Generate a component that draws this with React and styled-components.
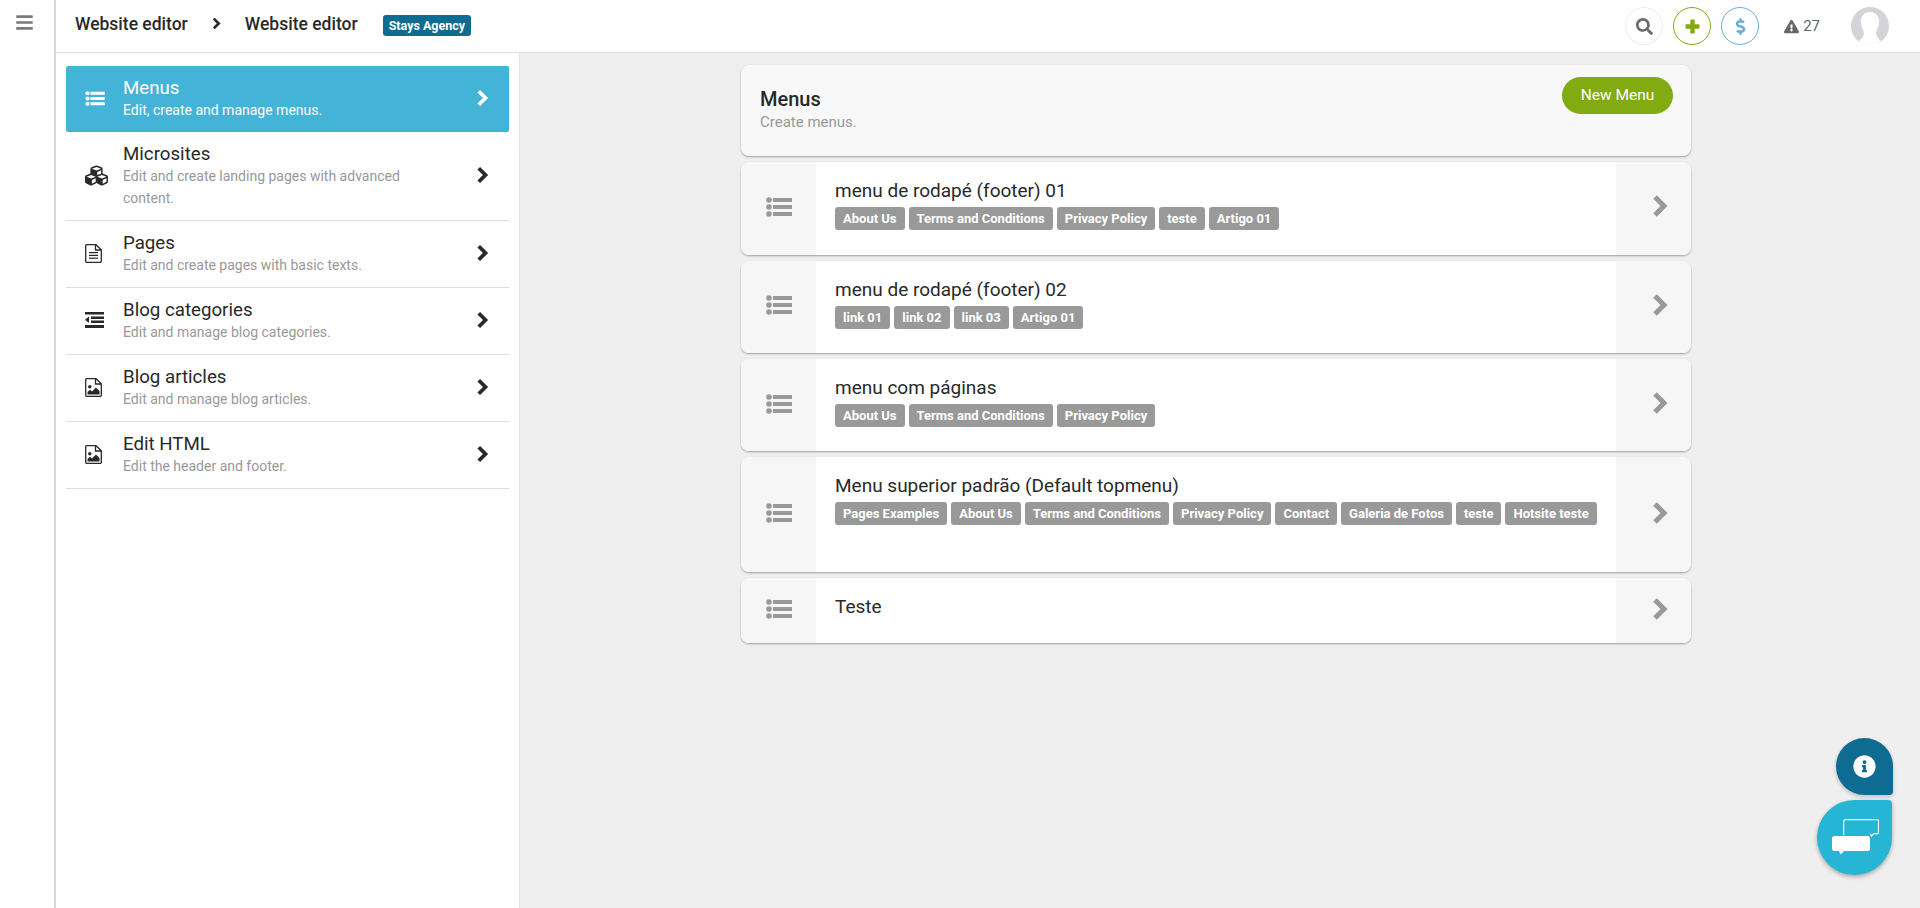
import styled, { createGlobalStyle } from "styled-components";
import {
  FaBars,
  FaCubes,
  FaDollarSign,
  FaExclamationTriangle,
  FaInfoCircle,
  FaSearch,
} from "react-icons/fa";

// thick chevron, the package one is too thin next to the reference
const Chevron = ({ width, height }) => (
  <svg viewBox="0 0 16 24" width={width} height={height}>
    <polyline points="3,3 12,12 3,21" fill="none" stroke="currentColor" strokeWidth="5" />
  </svg>
);

const PlusIcon = () => (
  <svg viewBox="0 0 15 15" width="15" height="15" fill="currentColor">
    <rect x="5.300" y="0.500" width="4.400" height="14" rx="0.800" />
    <rect x="0.500" y="5.300" width="14" height="4.400" rx="0.800" />
  </svg>
);

const ListIcon = ({ width, height }) => (
  <svg viewBox="0 0 26 20" width={width} height={height} fill="currentColor">
    <circle cx="3" cy="3" r="2.800" />
    <circle cx="3" cy="10" r="2.800" />
    <circle cx="3" cy="17" r="2.800" />
    <rect x="7" y="1" width="19" height="4" />
    <rect x="7" y="8" width="19" height="4" />
    <rect x="7" y="15" width="19" height="4" />
  </svg>
);

const OutdentIcon = () => (
  <svg viewBox="0 0 19 16" width="19" height="16" fill="currentColor">
    <rect x="0" y="0" width="19" height="2.500" />
    <rect x="6" y="4.500" width="13" height="2.500" />
    <rect x="6" y="8.500" width="13" height="2.500" />
    <rect x="0" y="13" width="19" height="3" />
    <polygon points="4,4.500 0,7.800 4,11" />
  </svg>
);

const FileIcon = ({ children }) => (
  <svg viewBox="0 0 17 19" width="17" height="19" fill="currentColor">
    <path
      d="M1.500 .7h9.500l5.300 5v11.800a.8.8 0 0 1-.8.8H1.500a.8.8 0 0 1-.8-.8V1.500a.8.8 0 0 1 .8-.8zM10.500 1v5h5.500"
      fill="none"
      stroke="currentColor"
      strokeWidth="1.300"
    />
    {children}
  </svg>
);

const PageIcon = () => (
  <FileIcon>
    <rect x="4" y="8" width="9" height="1.200" />
    <rect x="4" y="10.800" width="9" height="1.200" />
    <rect x="4" y="13.600" width="9" height="1.200" />
  </FileIcon>
);

const ImageIcon = () => (
  <FileIcon>
    <circle cx="4.800" cy="8.800" r="1.700" />
    <polygon points="2.500,16.500 2.500,14 5,11.800 7,13.500 11,9.500 14.500,13 14.500,16.500" />
  </FileIcon>
);

const CubesIcon = () => <FaCubes size={23} />;

const MenusIcon = () => <ListIcon width={20} height={15} />;

const sections = [
  { title: "Menus", text: "Edit, create and manage menus.", Icon: MenusIcon, active: true },
  { title: "Microsites", text: "Edit and create landing pages with advanced content.", Icon: CubesIcon },
  { title: "Pages", text: "Edit and create pages with basic texts.", Icon: PageIcon },
  { title: "Blog categories", text: "Edit and manage blog categories.", Icon: OutdentIcon },
  { title: "Blog articles", text: "Edit and manage blog articles.", Icon: ImageIcon },
  { title: "Edit HTML", text: "Edit the header and footer.", Icon: ImageIcon },
];

const menus = [
  {
    title: "menu de rodapé (footer) 01",
    height: 92.5,
    links: ["About Us", "Terms and Conditions", "Privacy Policy", "teste", "Artigo 01"],
  },
  {
    title: "menu de rodapé (footer) 02",
    height: 92.5,
    links: ["link 01", "link 02", "link 03", "Artigo 01"],
  },
  {
    title: "menu com páginas",
    height: 92,
    links: ["About Us", "Terms and Conditions", "Privacy Policy"],
  },
  {
    title: "Menu superior padrão (Default topmenu)",
    height: 115,
    links: [
      "Pages Examples",
      "About Us",
      "Terms and Conditions",
      "Privacy Policy",
      "Contact",
      "Galeria de Fotos",
      "teste",
      "Hotsite teste",
    ],
  },
  { title: "Teste", height: 65, links: [] },
];

const App = () => {
  return (
    <Page>
      <GlobalStyle />
      <Rail>
        <FaBars />
      </Rail>
      <Main>
        <TopBar>
          <Crumb>Website editor</Crumb>
          <CrumbArrow>
            <Chevron width={9} height={13} />
          </CrumbArrow>
          <Crumb>Website editor</Crumb>
          <AgencyBadge>Stays Agency</AgencyBadge>
          <TopActions>
            <RoundButton $color="#ececec" $icon="#6b6b6b">
              <FaSearch />
            </RoundButton>
            <RoundButton $color="#82ab12" $icon="#82ab12">
              <PlusIcon />
            </RoundButton>
            <RoundButton $color="#6aaed6" $icon="#6aaed6">
              <FaDollarSign />
            </RoundButton>
            <Alerts>
              <FaExclamationTriangle />
              27
            </Alerts>
            <Avatar>
              <svg viewBox="0 0 38 38" width="38" height="38">
                <circle cx="19" cy="19" r="19" fill="#d2d4d8" />
                <path
                  d="M19 5c-6.500 0-10 5-9 12 .5 4 3 6 3 9 0 3-2 5-5 8 3 2.500 7 4 11 4s8-1.500 11-4c-3-3-5-5-5-8 0-3 2.500-5 3-9 1-7-2.500-12-9-12z"
                  fill="#fff"
                />
              </svg>
            </Avatar>
          </TopActions>
        </TopBar>
        <Body>
          <Sidebar>
            {sections.map((section) => (
              <SideItem key={section.title} $active={section.active}>
                <SideIcon>
                  <section.Icon />
                </SideIcon>
                <SideText>
                  <SideTitle>{section.title}</SideTitle>
                  <SideDesc $active={section.active}>{section.text}</SideDesc>
                </SideText>
                <SideArrow>
                  <Chevron width={13} height={18} />
                </SideArrow>
              </SideItem>
            ))}
          </Sidebar>
          <Content>
            <HeaderCard>
              <div>
                <HeaderTitle>Menus</HeaderTitle>
                <HeaderText>Create menus.</HeaderText>
              </div>
              <NewButton>New Menu</NewButton>
            </HeaderCard>
            {menus.map((menu) => (
              <MenuCard key={menu.title} $height={menu.height}>
                <CardHandle>
                  <ListIcon width={26} height={20} />
                </CardHandle>
                <CardBody>
                  <CardTitle>{menu.title}</CardTitle>
                  <Tags>
                    {menu.links.map((link) => (
                      <Tag key={link}>{link}</Tag>
                    ))}
                  </Tags>
                </CardBody>
                <CardArrow>
                  <Chevron width={16} height={24} />
                </CardArrow>
              </MenuCard>
            ))}
          </Content>
        </Body>
      </Main>
      <InfoBubble>
        <FaInfoCircle />
      </InfoBubble>
      <ChatBubble>
        <svg viewBox="0 0 47 37" width="47" height="37" fill="none">
          <path
            d="M13 .7h32a1.500 1.500 0 0 1 1.500 1.500v11a1.500 1.500 0 0 1-1.500 1.500h-3l-2.500 2.500-1-2.500"
            stroke="#fff"
            strokeWidth="1.200"
          />
          <path d="M11.700 16V2.200A1.500 1.500 0 0 1 13 .7" stroke="#fff" strokeWidth="1.200" />
          <path
            d="M2.500 17h33a2.500 2.500 0 0 1 2.500 2.500v10a2.500 2.500 0 0 1-2.500 2.500H12l-3.500 3.500L7 32H2.500A2.500 2.500 0 0 1 0 29.500v-10A2.500 2.500 0 0 1 2.500 17z"
            fill="#fff"
          />
        </svg>
      </ChatBubble>
    </Page>
  );
};

const GlobalStyle = createGlobalStyle`
  html, body {
    margin: 0;
    height: 100%;
    overflow: hidden;
  }

  body {
    font-family: Roboto, "Liberation Sans", sans-serif;
    color: #292929;
  }

  * {
    box-sizing: border-box;
  }
`;

const Page = styled.div`
  display: flex;
  width: 1920px;
  height: 908px;
  background: #fff;
`;

const Rail = styled.div`
  flex: 0 0 56px;
  display: flex;
  justify-content: center;
  padding: 13px 5px 0 0;
  border-right: 2px solid #d9d9d9;
  color: #7a7a7a;
  font-size: 19px;
`;

const Main = styled.div`
  flex: 1;
  min-width: 0;
  display: flex;
  flex-direction: column;
`;

const TopBar = styled.header`
  flex: 0 0 53px;
  display: flex;
  align-items: center;
  padding: 0 31px 5px 19px;
  border-bottom: 1px solid #dedede;
`;

const Crumb = styled.span`
  font-size: 17.500px;
  font-weight: 500;
  color: #292929;
`;

const CrumbArrow = styled.span`
  display: flex;
  margin: 0 24px;
  color: #292929;
`;

const AgencyBadge = styled.span`
  display: flex;
  align-items: center;
  height: 21px;
  margin: 3px 0 0 25px;
  padding: 0 6px;
  border-radius: 3px;
  background: #0e6b92;
  color: #fff;
  font-size: 12.500px;
  font-weight: 700;
`;

const TopActions = styled.div`
  margin-left: auto;
  display: flex;
  align-items: center;
  gap: 10px;
  padding-top: 5px;
`;

const RoundButton = styled.span`
  width: 38px;
  height: 38px;
  display: flex;
  align-items: center;
  justify-content: center;
  border: 1px solid ${(props) => props.$color};
  border-radius: 50%;
  color: ${(props) => props.$icon};
  font-size: 17px;
`;

const Alerts = styled.span`
  display: flex;
  align-items: center;
  gap: 4px;
  margin: 0 21px 0 15px;
  color: #666;
  font-size: 15px;

  svg {
    font-size: 15px;
  }
`;

const Avatar = styled.span`
  display: flex;
  width: 38px;
  height: 38px;
`;

const Body = styled.div`
  flex: 1;
  min-height: 0;
  display: flex;
`;

const Sidebar = styled.nav`
  flex: 0 0 464px;
  padding: 13px 10px 0;
  border-right: 1px solid #e4e4e4;
  background: #fff;
`;

const SideItem = styled.div`
  display: flex;
  align-items: center;
  padding: 11px 20px 11px 19px;
  border-bottom: ${(props) => (props.$active ? "0" : "1px solid #dedede")};
  background: ${(props) => (props.$active ? "#44b3d8" : "transparent")};
  color: ${(props) => (props.$active ? "#fff" : "#292929")};
  border-radius: ${(props) => (props.$active ? "2px" : "0")};
`;

const SideIcon = styled.span`
  flex: 0 0 38px;
  display: flex;
  margin-top: -2px;
`;

const SideText = styled.div`
  flex: 1;
  padding-right: 50px;
`;

const SideTitle = styled.div`
  font-size: 18.700px;
  line-height: 22px;
`;

const SideDesc = styled.div`
  font-size: 14px;
  line-height: 22px;
  color: ${(props) => (props.$active ? "#fff" : "#999")};
`;

const SideArrow = styled.span`
  display: flex;
  margin-top: -3px;
`;

const Content = styled.main`
  flex: 1;
  display: flex;
  flex-direction: column;
  gap: 6px;
  padding: 12px 229px 0 221px;
  background: #efefef;
`;

const HeaderCard = styled.section`
  flex: 0 0 91px;
  display: flex;
  justify-content: space-between;
  padding: 12px 18px 0 19px;
  border-radius: 8px;
  background: #f8f8f8;
  box-shadow: 0 1px 2px rgba(0, 0, 0, 0.35);
`;

const HeaderTitle = styled.h2`
  margin: 10px 0 0;
  font-size: 20px;
  line-height: 24px;
  font-weight: 500;
`;

const HeaderText = styled.p`
  margin: 0;
  font-size: 15px;
  line-height: 22px;
  color: #999;
`;

const NewButton = styled.button`
  height: 37px;
  width: 111px;
  padding: 0 0 2px;
  border: 0;
  border-radius: 19px;
  background: #82ab12;
  color: #fff;
  font-family: inherit;
  font-size: 15.500px;
`;

const MenuCard = styled.article`
  flex: 0 0 ${(props) => props.$height}px;
  display: flex;
  overflow: hidden;
  border-radius: 8px;
  background: #fff;
  box-shadow: 0 1px 2px rgba(0, 0, 0, 0.35);
`;

const CardHandle = styled.div`
  flex: 0 0 75px;
  display: flex;
  align-items: center;
  justify-content: center;
  padding-bottom: 3px;
  background: #f6f6f6;
  color: #999;
`;

const CardBody = styled.div`
  flex: 1;
  min-width: 0;
  padding: 16px 19px 0;
`;

const CardTitle = styled.h3`
  margin: 0 0 3px;
  font-size: 19px;
  line-height: 26px;
  font-weight: 400;
`;

const Tags = styled.div`
  display: flex;
  gap: 4px;
`;

const Tag = styled.span`
  flex: none;
  height: 23px;
  display: flex;
  align-items: center;
  padding: 0 8px;
  border-radius: 3px;
  background: #999;
  color: #fff;
  font-size: 13px;
  font-weight: 700;
  white-space: nowrap;
`;

const CardArrow = styled.div`
  flex: 0 0 75px;
  display: flex;
  align-items: center;
  justify-content: center;
  padding: 0 0 4px 12px;
  background: #f6f6f6;
  color: #999;
`;

const InfoBubble = styled.div`
  position: absolute;
  left: 1836px;
  top: 738px;
  width: 57px;
  height: 57px;
  display: flex;
  align-items: center;
  justify-content: center;
  border-radius: 50% 50% 4px 50%;
  background: #0e6b92;
  color: #fff;
  font-size: 23px;
  box-shadow: 0 2px 4px rgba(0, 0, 0, 0.2);
`;

const ChatBubble = styled.div`
  position: absolute;
  left: 1817px;
  top: 800px;
  width: 75px;
  height: 75px;
  display: flex;
  align-items: center;
  justify-content: center;
  padding-left: 2px;
  border-radius: 50% 4px 50% 50%;
  background: #26b5d5;
  box-shadow: 0 2px 4px rgba(0, 0, 0, 0.3);
`;

export default App;
